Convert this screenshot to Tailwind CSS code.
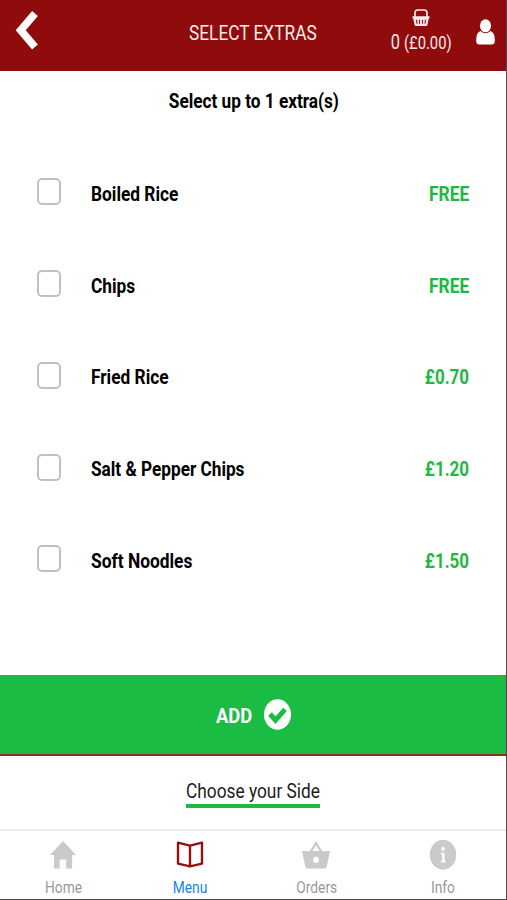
<!DOCTYPE html>
<html lang="en">
<head>
<meta charset="utf-8">
<title>Select Extras</title>
<script src="https://cdn.jsdelivr.net/npm/@tailwindcss/browser@4"></script>
</head>
<body class="bg-white">
<div class="flex h-[900px] w-[507px] flex-col overflow-hidden border-r border-b border-[#4a4a4a] bg-white font-['Roboto',sans-serif] text-black">
  <header class="grid h-[71px] shrink-0 grid-cols-[169px_168px_169px] bg-[#900b0c] text-[#fbeaea]">
    <div class="pt-[10px] pl-[15px]">
      <svg class="h-[41px] w-[24px]" viewBox="0 0 24 41" fill="none" stroke="#fff" stroke-width="7.6" stroke-linejoin="miter"><path d="M20 3.5 5.7 20.3 20 37"/></svg>
    </div>
    <div class="flex justify-center pt-[19px]"><span class="scale-x-[.865] whitespace-nowrap text-[20px] leading-[28px]">SELECT EXTRAS</span></div>
    <div class="flex">
      <div class="ml-[41px] flex w-[86px] flex-col items-center pt-[9px]">
        <svg class="h-[18px] w-[18px]" viewBox="0 0 18 18"><path d="M3 8V3.8Q3 1 6 1h6q3 0 3 2.8V8" fill="none" stroke="#fbeaea" stroke-width="1.7"/><path d="M.5 7.3h17v2.2h-.8l-1.2 6.3q-.2 1.2-1.3 1.2H3.8q-1.1 0-1.3-1.2L1.3 9.5H.5z" fill="#fbeaea"/><path d="m4.5 10.8.5 4M7.5 10.8v4M10.5 10.8v4M13.5 10.8l-.5 4" stroke="#900b0c" stroke-width="1.1"/></svg>
        <div class="flex scale-x-[.82] items-baseline gap-[5px] whitespace-nowrap pt-px leading-[28px]"><span class="text-[20px]">0</span><span class="text-[18px]">(£0.00)</span></div>
      </div>
      <svg class="mt-[19px] ml-[12px] h-[26px] w-[19px]" viewBox="0 0 19 26" fill="#fff"><ellipse cx="9.5" cy="6.8" rx="5.6" ry="6.5"/><path d="M4.4 12Q9.5 16.4 14.6 12 18.8 13.6 18.8 20.5V22Q18.8 25.5 15.5 25.5h-12Q.2 25.5.2 22V20.5Q.2 13.6 4.4 12z"/></svg>
    </div>
  </header>
  <main class="flex h-[603.5px] shrink-0 flex-col">
    <h1 class="flex h-[77px] justify-center pt-[16px] pl-[2px]"><span class="scale-x-[.86] whitespace-nowrap text-[20px] leading-[28px] font-bold">Select up to 1 extra(s)</span></h1>
    <ul class="text-[20px] leading-[28px] font-bold">
      <li class="flex h-[91.75px] items-center pr-[37px] pl-[37px]"><span class="mb-[4px] h-[27px] w-[24px] rounded-[5px] border-2 border-[#c0c0c0]"></span><span class="ml-[30px] origin-left scale-x-[.865]">Boiled Rice</span><span class="ml-auto origin-right scale-x-[.87] text-[#1fb842]">FREE</span></li>
      <li class="flex h-[91.75px] items-center pr-[37px] pl-[37px]"><span class="mb-[4px] h-[27px] w-[24px] rounded-[5px] border-2 border-[#c0c0c0]"></span><span class="ml-[30px] origin-left scale-x-[.865]">Chips</span><span class="ml-auto origin-right scale-x-[.87] text-[#1fb842]">FREE</span></li>
      <li class="flex h-[91.75px] items-center pr-[37px] pl-[37px]"><span class="mb-[4px] h-[27px] w-[24px] rounded-[5px] border-2 border-[#c0c0c0]"></span><span class="ml-[30px] origin-left scale-x-[.865]">Fried Rice</span><span class="ml-auto origin-right scale-x-[.85] text-[#1fb842]">£0.70</span></li>
      <li class="flex h-[91.75px] items-center pr-[37px] pl-[37px]"><span class="mb-[4px] h-[27px] w-[24px] rounded-[5px] border-2 border-[#c0c0c0]"></span><span class="ml-[30px] origin-left scale-x-[.86]">Salt &amp; Pepper Chips</span><span class="ml-auto origin-right scale-x-[.85] text-[#1fb842]">£1.20</span></li>
      <li class="flex h-[91.75px] items-center pr-[37px] pl-[37px]"><span class="mb-[4px] h-[27px] w-[24px] rounded-[5px] border-2 border-[#c0c0c0]"></span><span class="ml-[30px] origin-left scale-x-[.868]">Soft Noodles</span><span class="ml-auto origin-right scale-x-[.85] text-[#1fb842]">£1.50</span></li>
    </ul>
  </main>
  <button class="flex h-[81.5px] w-full shrink-0 items-center border-b-2 border-[#922f1c] bg-[#1bbc43] pl-[216px] text-white">
    <span class="w-[48px] pt-[3px] text-left"><span class="inline-block origin-left scale-x-[.92] text-[20px] leading-[28px] font-bold">ADD</span></span>
    <svg class="h-[31px] w-[27px]" viewBox="0 0 27 31"><ellipse cx="13.5" cy="15.5" rx="13.5" ry="15.3" fill="#fff"/><path d="m6 15 5.5 6.2L21 10.4" fill="none" stroke="#1bbc43" stroke-width="4.9"/></svg>
  </button>
  <section class="flex h-[73px] shrink-0 justify-center pt-[21px]">
    <div class="h-[31px] w-[134px] border-b-[4px] border-[#1bbc43]"><span class="block origin-left scale-x-[.865] whitespace-nowrap text-[20px] leading-[28px] text-[#1c1c1c]">Choose your Side</span></div>
  </section>
  <nav class="grid h-[70px] shrink-0 grid-cols-4 border-t-2 border-[#ececec] text-[16px] leading-[20px] text-[#999]">
    <a class="flex flex-col items-center pt-[9px]"><svg class="h-[32px] w-[28px]" viewBox="0 0 28 32" fill="#cacaca"><path d="M14 1 27 15h-3.9v13.5h-5.8V19.5h-6.6v9H4.9V15H1z"/></svg><span class="mt-[6px] scale-x-[.86]">Home</span></a>
    <a class="flex flex-col items-center pt-[9px]"><svg class="h-[32px] w-[28px]" viewBox="0 0 28 32" fill="none" stroke="#960f12" stroke-width="2.4" stroke-linejoin="round"><path d="M2 2.7 14 5.6 26 2.7V23.6L14 26.3 2 23.6zM14 5.6v20.5"/></svg><span class="mt-[6px] scale-x-[.86] text-[#1683f5]">Menu</span></a>
    <a class="flex flex-col items-center pt-[9px]"><svg class="h-[32px] w-[28px]" viewBox="0 0 28 32"><path d="M8.5 12 14 3.2 19.5 12" fill="none" stroke="#cacaca" stroke-width="2.3"/><path d="M0 11h28l-3.2 15.2q-.6 2.3-2.5 2.3H5.7q-1.9 0-2.5-2.3z" fill="#cacaca"/><ellipse cx="14" cy="19.7" rx="2.8" ry="3.3" fill="#fff"/></svg><span class="mt-[6px] scale-x-[.86]">Orders</span></a>
    <a class="flex flex-col items-center pt-[9px]"><svg class="h-[32px] w-[28px]" viewBox="0 0 28 32"><ellipse cx="14" cy="14.7" rx="13.2" ry="15" fill="#cacaca"/><ellipse cx="14" cy="8.8" rx="1.8" ry="2" fill="#fff"/><path d="M11.8 12.8h3.8v8h1v1.8h-4.4v-1.8h1v-6.2h-1.4z" fill="#fff"/></svg><span class="mt-[6px] scale-x-[.86]">Info</span></a>
  </nav>
</div>
</body>
</html>
